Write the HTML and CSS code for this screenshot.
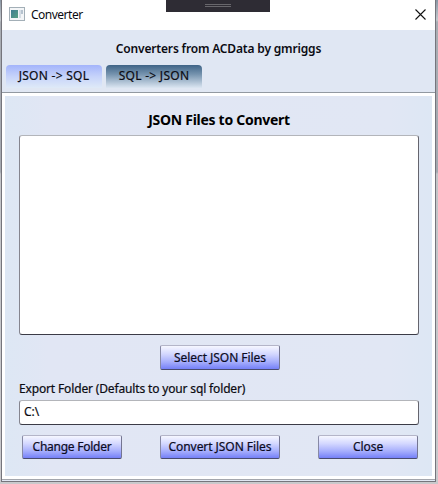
FILE: index.html
```html
<!DOCTYPE html>
<html lang="en">
<head>
<meta charset="utf-8">
<title>Converter</title>
<link rel="stylesheet" href="styles.css">
</head>
<body>
<div class="desktop">
  <main class="window">
    <header class="titlebar">
      <svg class="app-icon" width="16" height="14" viewBox="0 0 16 14">
        <defs><linearGradient id="g" x2="1" y2="1"><stop stop-color="#3f7c91"/><stop offset="1" stop-color="#57a083"/></linearGradient></defs>
        <rect x=".5" y=".5" width="15" height="13" fill="#f3f5f7" stroke="#a3afb7"/>
        <rect x="2" y="3" width="7" height="8" fill="url(#g)"/>
        <rect x="10" y="3" width="2" height="8" fill="#d5dde5"/>
        <rect x="12" y="3" width="2" height="4" fill="#b6c3cf"/>
      </svg>
      <span class="caption">Converter</span>
      <svg class="close-icon" width="11" height="11" viewBox="0 0 11 11"><path d="M.5.5l10 10M10.5.5l-10 10" stroke="#111" stroke-width="1.1"/></svg>
    </header>
    <h1 class="heading"><span>Converters from ACData by gmriggs</span></h1>
    <nav class="tabs">
      <div class="tab selected"><span>JSON -&gt; SQL</span></div>
      <div class="tab"><span>SQL -&gt; JSON</span></div>
    </nav>
    <section class="panel">
      <h2 class="subtitle"><span>JSON Files to Convert</span></h2>
      <div class="listbox"></div>
      <button class="button select"><span>Select JSON Files</span></button>
      <label class="label"><span>Export Folder (Defaults to your sql folder)</span></label>
      <div class="textbox"><span>C:\</span></div>
      <div class="actions">
        <button class="button change"><span>Change Folder</span></button>
        <button class="button convert"><span>Convert JSON Files</span></button>
        <button class="button close"><span>Close</span></button>
      </div>
    </section>
  </main>
  <div class="grip"><i></i></div>
</div>
</body>
</html>
```
FILE: styles.css
```css
* { box-sizing: border-box; }
body { margin: 0; font: 12px/16px "Noto Sans", "Open Sans", sans-serif; color: #0b0b12; overflow: hidden; }
.desktop {
  width: 438px; height: 484px; padding: 0 2px 2px 1px; position: relative;
  background: linear-gradient(#8a96a4 0, #c3c8cd 20px, #a9adb3 22px, #a5a9b0 172px, #c4c5c8 174px, #c9c9cc 100%);
}
.window {
  width: 435px; height: 482px; background: #e0e7f3;
  border: solid #75757c; border-width: 0 1px 1px;
  display: flex; flex-direction: column;
}
.titlebar { height: 30px; background: #fff; display: flex; align-items: center; padding: 0 9px 2px 7px; flex: none; }
.caption { margin: 2px 0 0 6px; flex: 1; white-space: nowrap; letter-spacing: -.5px; }
.heading { margin: 11px 0 0; font-size: 12px; line-height: 16px; font-weight: 600; text-align: center; white-space: nowrap; letter-spacing: -.17px; }
.tabs { display: flex; gap: 4px; margin: 8px 0 0 4px; height: 27px; flex: none; }
.tab { width: 96px; height: 23px; border-radius: 4px 4px 0 0; text-align: center; line-height: 22px; white-space: nowrap; letter-spacing: .28px; background: linear-gradient(#3f6487, #7593ae 40%, #dce6f2); }
.tab.selected { background: linear-gradient(#a3b4fb, #c6d3fa 50%, #dfeaf7); }
.tab, .button, .label, .textbox { -webkit-text-stroke: .2px; }
.panel {
  flex: 1; border: 3px solid #fff; box-shadow: 0 -1px #9299a1, 0 1px #a3a6ad; margin: 1px 0 2px;
  padding: 0 13px 0 14px; display: flex; flex-direction: column; align-items: flex-start;
  background: linear-gradient(90deg, #dde7f4, #e1e6f4 10%, #e1e7f4 90%, #dde7f4);
}
.subtitle { margin: 14px 0 0; width: 400px; height: 20px; font-size: 14px; line-height: 20px; font-weight: 700; text-align: center; color: #000; white-space: nowrap; letter-spacing: -.28px; }
.listbox, .textbox { width: 400px; background: #fff; border: 1px solid; border-color: #b3b5ba #65656e #3b3b46 #85858f; border-radius: 3px; }
.listbox { height: 200px; margin-top: 5px; flex: none; }
.button {
  border: 1px solid; border-color: #b4b5c8 #747591 #494b70 #8789a5; border-radius: 2px; padding: 0;
  height: 24px; font: inherit; line-height: 20px; color: #0b0b22; white-space: nowrap; letter-spacing: -.05px;
  background: linear-gradient(#f6f7ff, #d3d7ff 35%, #a5adfc 70%, #7580f8);
}
.select { width: 120px; height: 25px; margin: 10px 0 0 141px; flex: none; }
.label { margin-top: 11px; height: 16px; white-space: nowrap; letter-spacing: -.15px; }
.textbox { height: 25px; margin-top: 3px; padding-left: 4px; line-height: 22px; flex: none; }
.actions { display: flex; justify-content: space-between; width: 396px; margin: 10px 0 0 3px; }
.change, .close { width: 100px; }
.change { letter-spacing: -.25px; }
.convert { width: 120px; }
.grip { position: absolute; left: 166px; top: 0; width: 104px; height: 12px; background: #2e2c34; }
.grip i { display: block; margin: 4px auto 0; width: 26px; height: 3px; border: solid #68676c; border-width: 1px 0; }
```
